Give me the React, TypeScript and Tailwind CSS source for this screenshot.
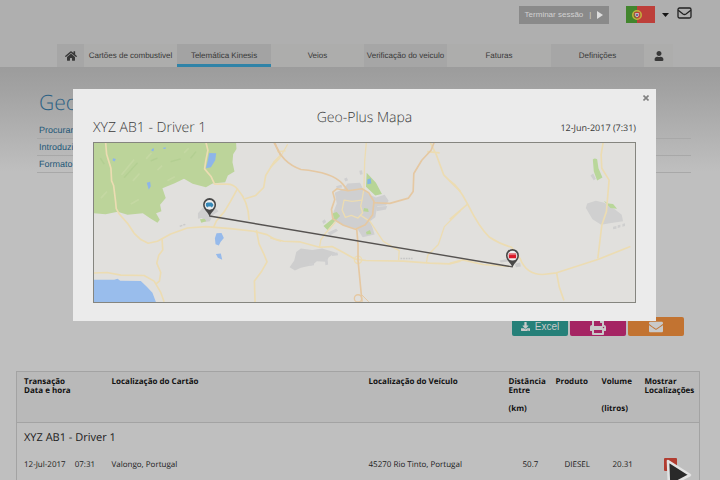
import type { ReactNode } from "react";
import { FaHome, FaUser, FaPrint, FaEnvelope, FaDownload } from "react-icons/fa";

type Tab = { label: ReactNode; name: string; shaded?: boolean; active?: boolean };

const tabs: Tab[] = [
  { name: "Home", label: <FaHome size={12} />, shaded: true },
  { name: "Cartões de combustivel", label: "Cartões de combustivel" },
  { name: "Telemática Kinesis", label: "Telemática Kinesis", active: true },
  { name: "Veios", label: "Veios" },
  { name: "Verificação do veiculo", label: "Verificação do veiculo", shaded: true },
  { name: "Faturas", label: "Faturas" },
  { name: "Definições", label: "Definições", shaded: true },
  { name: "User", label: <FaUser size={10} /> },
];

const links = ["Procurar", "Introduzir", "Formato"];

function Flag() {
  return (
    <svg className="h-[17px] w-[29px]" viewBox="0 0 29 17" role="img" aria-label="Português">
      <rect width="29" height="17" fill="#bd3f3a" />
      <rect width="11" height="17" fill="#42852d" />
      <circle cx="11" cy="9" r="4.2" fill="none" stroke="#c3b13c" strokeWidth="1.6" />
      <path d="M8.800 6.500h4.400v3.500q-2.200 3.500-4.400 0z" fill="#d6cfd0" stroke="#bd403b" strokeWidth="1" />
      <rect x="10.200" y="7.800" width="1.600" height="2.400" fill="#4a5f90" />
    </svg>
  );
}

function Header() {
  return (
    <header className="flex h-[67px] flex-col justify-between bg-[#afafaf]">
      <div className="mr-[28px] flex items-start justify-end pt-[6px]">
        <button className="flex h-[18px] w-[90px] items-center justify-center gap-[6px] bg-[#8a8a8a] text-[8px] text-[#d2d2d2]">
          <span>Terminar sessão</span>
          <span>|</span>
          <svg className="h-[8px] w-[6px]" viewBox="0 0 6 8" aria-hidden="true">
            <path d="M0 0L6 4L0 8Z" fill="#dedede" />
          </svg>
        </button>
        <button className="ml-[17px] flex items-center gap-[7px]" aria-label="Idioma">
          <Flag />
          <svg className="h-[4px] w-[7px]" viewBox="0 0 7 4" aria-hidden="true">
            <path d="M0 0H7L3.500 4Z" fill="#151515" />
          </svg>
        </button>
        <button className="ml-[8px] mt-px" aria-label="Mensagens">
          <svg className="block h-[12px] w-[15px]" viewBox="0 0 15 12" fill="none" stroke="#222" strokeWidth="1.3">
            <rect x="1" y="1" width="13" height="10" rx="1.500" />
            <path d="M1.200 3.200L6 7Q7.500 8 9 7L13.800 3.200" />
          </svg>
        </button>
      </div>
      <nav className="ml-[57px] mr-[47px] grid h-[23px] grid-cols-[27fr_93fr_94fr_93fr_83fr_104fr_93fr_29fr] text-[8px] text-[#383838]">
        {tabs.map((t) => (
          <a
            key={t.name}
            href="#"
            aria-label={t.name}
            className={
              "flex items-center justify-center whitespace-nowrap " +
              (t.active
                ? "border-y-3 border-t-transparent border-b-[#2f83a8] bg-[#a3a3a3] bg-clip-border"
                : t.shaded
                  ? "bg-[#a6a6a6]"
                  : "bg-[#adadac]")
            }
          >
            {t.label}
          </a>
        ))}
      </nav>
    </header>
  );
}

function Pin({ x, y, kind }: { x: number; y: number; kind: "van" | "card" }) {
  return (
    <g transform={`translate(${x} ${y})`}>
      <path d="M0 0C-1-5-6.500-7-6.500-12.500A6.500 6.500 0 0 1 6.500-12.500C6.500-7 1-5 0 0Z" fill="#484848" />
      <circle cy="-12.200" r="4.900" fill="#efefef" />
      {kind === "van" ? (
        <g>
          <path d="M-3.700-10.500V-14H-2.500V-14.600H2L3.700-12.800V-10.500Z" fill="#3789b8" />
          <circle cx="-2" cy="-10.400" r=".7" fill="#3789b8" />
          <circle cx="2" cy="-10.400" r=".7" fill="#3789b8" />
        </g>
      ) : (
        <g>
          <rect x="-3.700" y="-14.500" width="7.400" height="4.800" rx=".5" fill="#d91828" />
          <path d="M-3.700-13.300H3.700" stroke="#efb0b0" strokeWidth=".6" />
        </g>
      )}
    </g>
  );
}

function RouteMap() {
  return (
    <svg
      className="block h-[161px] w-full border border-[#85857f] bg-[#e1e0dd]"
      viewBox="0 0 543 161"
      preserveAspectRatio="xMidYMid slice"
      role="img"
      aria-label="Mapa"
    >
      {/* western area: forest, lakes and coast */}
      <g transform="translate(-3 -4) scale(.33333)" fill="none" strokeLinejoin="round">
        <path
          d="M0 0H436L438 32L428 48L426 72L432 100L412 112L404 132L366 136L346 147L306 137L280 122L252 135L215 150L225 180L208 200L212 220L196 226L207 245L200 254L178 241L156 226L110 230L80 221L44 229L0 225Z"
          fill="#bcd49a"
        />
        <g stroke="#cadba9" strokeWidth="5" opacity=".6">
          <path d="M92 110l38-46M126 128l20-22M166 62l16-18M200 96l14-14M230 128l22-12M280 44l14-14M30 180l18-20M120 198l24-14" />
        </g>
        <g stroke="#aac98a" strokeWidth="4" opacity=".5">
          <path d="M100 118l40-44M180 68l20-8M300 60l16-20M28 60l12 18M240 70l30-8" />
        </g>
        <path d="M356 44L377 45L374 66L361 87L346 90L352 66Z" fill="#8db5ea" />
        <path d="M168 134l10-3 2 13-6 11zM66 60l9 2-4 8-6-3zM183 32l7-2-2 9-6-1zM218 28l8 0-2 4h-6z" fill="#8db5ea" />
        <path d="M378 286L393 285L400 300L390 312L385 323L375 319L373 301ZM376 348L391 347L395 366L382 360Z" fill="#96baeb" />
        <path d="M0 426H70L80 423L88 429L150 430L168 447L185 465L198 500H0Z" fill="#99bdec" />
        <path d="M322 226L336 210L352 206L374 208L384 220L366 232L358 250L342 252L334 240L322 242Z" fill="#cfcfcf" />
        <path d="M328 244L342 242L347 250L332 254Z" fill="#b9d597" />
        <path d="M266 263l8-3 2 4-8 3zM277 259l6-2 2 4-6 2z" fill="#cbcbcb" />
        <g stroke="#ecdcb2" strokeWidth="5">
          <path d="M43 0L47 48L60 90L62 128L68 142L74 190L76 212L85 228L110 256L130 286L150 305L172 316L200 310L240 288L290 270L346 266L420 272L490 280L530 290L552 303L572 310" />
          <path d="M343 0L352 36L346 66L342 92L362 116L372 138L410 138Q430 138 442 154Q474 190 476 246" />
          <path d="M440 154L420 190L402 220L378 248L368 270M464 182L496 172L520 148L526 112L552 70L572 50" />
          <path d="M0 406L48 404L90 412L160 413L190 430L210 464L220 492M214 304L216 336L204 352L198 376L210 404L206 430L194 440" />
          <path d="M498 276L506 318L522 352L530 372L514 400L492 430L494 494" />
        </g>
        <path d="M550 10L572 52" stroke="#e4c096" strokeWidth="5" />
      </g>

      {/* city and ring road */}
      <g transform="translate(177 -4) scale(.33333)" fill="none" strokeLinejoin="round">
        <path
          d="M194 164L222 152L232 136L270 134L280 154L298 170L318 178L344 170L356 188L348 202L322 204L316 238L300 250L308 270L314 290L278 298L262 272L230 266L194 248L190 222L200 196Z"
          fill="#cfcfd0"
        />
        <path d="M78 342L92 332L126 336L156 332L196 344L176 358L168 372L140 370L126 382L92 390L74 398L58 388L72 368Z" fill="#cecece" />
        <path d="M268 98l8-2 2 12-8 2zM222 122l8-4 4 8-8 4zM198 144l16-4 2 8-16 2zM156 250l8-6 4 8-8 6zM172 284l26-12 6 6-24 14zM318 206l34-2-4 10-28 6zM116 378l14-4 2 8-14 2zM164 364l8-2 2 18-8 2zM184 346l18-2 2 8-18 2z" fill="#cfcfd0" />
        <path d="M290 104L318 134L336 168L316 172L288 146ZM160 264L190 240L188 226L200 222L210 234L192 252L172 276ZM282 210L294 212L296 222L280 220ZM288 282L300 276L304 288L290 290Z" fill="#b7d596" />
        <path d="M292 124L302 120L304 136L292 138Z" fill="#83b5e4" />
        <g stroke="#ecdcb2" strokeWidth="4">
          <path d="M290 0L284 70L282 150L276 186M0 88L28 60L52 18M20 40L46 38" />
          <path d="M222 186L246 190L276 186L272 204L278 224L264 240L244 232L226 238L216 216ZM272 232L300 250L320 280L340 310L366 326L388 338L386 368" />
          <path d="M0 300L40 310L90 312L148 328L186 326L220 344L256 364L288 368L400 370L480 376L540 378L572 370" strokeWidth="5" />
          <path d="M148 328L152 306L166 286L196 252M470 374L474 352L506 320L524 266L572 218" />
          <path d="M482 14L500 50L522 110L572 160M472 40L510 44" strokeWidth="5" />
          <circle cx="264" cy="366" r="11" />
        </g>
        <g stroke="#e5c8a2" strokeWidth="5">
          <path d="M10 0Q26 70 92 94Q188 102 218 138L234 158" />
          <path d="M200 152L234 158L276 152L296 164L312 190L308 230L286 260L256 274L220 262L188 242L184 214L194 184L188 162Z" />
          <path d="M312 194L360 196L416 180L430 160L432 106L456 66L484 36L498 0M260 272L264 320L264 368L276 492" />
          <circle cx="264" cy="482" r="11" strokeWidth="4" />
          <path d="M274 470L296 492" strokeWidth="3" />
        </g>
        <path d="M392 362h36" stroke="#c6c6c6" strokeWidth="4" strokeDasharray="5 3" />
      </g>

      {/* eastern roads and town */}
      <g transform="translate(357 -4) scale(.33333)" fill="none" strokeLinejoin="round">
        <path d="M414 196L440 188L466 194L498 214L518 230L522 250L482 256L456 260L430 244L410 210Z" fill="#d0d0d0" />
        <path d="M492 266l10-2v8l-10 2zM506 262l8-2v8l-8 2zM520 258l8-2v8l-8 2zM424 112l8-6 8 16-6 4z" fill="#cfcfcf" />
        <path d="M431 64Q436 58 444 63L448 90L460 118L444 127L434 100ZM464 188L478 196L492 198L504 212L484 210Z" fill="#b9d79a" />
        <path d="M150 368l30-6 4 8-30 4zM196 378l16-4 2 12-14 2z" fill="#cbcbcb" />
        <g stroke="#ecdcb2" strokeWidth="5">
          <path d="M0 128Q26 144 54 198Q90 270 120 298Q150 318 186 328L212 362Q230 410 280 410L322 405L448 364L544 326" />
          <path d="M0 244L54 198M322 405L330 448L344 488M464 0L456 50L458 90L480 126L472 220L458 262L446 362M0 376L40 366L100 380L180 386" />
        </g>
      </g>

      <path d="M116 74L420 125" stroke="#555250" strokeWidth="1.400" />
      <Pin x={116} y={75} kind="van" />
      <Pin x={420} y={126} kind="card" />
    </svg>
  );
}

function MapDialog() {
  return (
    <section
      role="dialog"
      aria-label="Geo-Plus Mapa"
      className="absolute left-[73px] right-[64px] top-[89px] bg-[#ebebeb] px-[20px] pb-[18px] text-[#3a3a3a]"
    >
      <div className="-mr-[15px] flex justify-end pt-[4px]">
        <button aria-label="Fechar" className="flex h-[10px] w-[10px] items-center justify-center">
          <svg className="h-[6px] w-[6px]" viewBox="0 0 6 6" stroke="#808080" strokeWidth="1.600" aria-hidden="true">
            <path d="M.5 .5L5.500 5.500M5.500 .5L.5 5.500" />
          </svg>
        </button>
      </div>
      <div className="grid h-[39px] grid-cols-[1fr_auto_1fr] font-['Open_Sans',sans-serif]">
        <p className="self-end pb-[4px] text-[14px] leading-[20px] font-light">XYZ AB1 - Driver 1</p>
        <h2 className="pt-[5px] text-[14px] leading-[20px] font-light">Geo-Plus Mapa</h2>
        <p className="self-end pb-[4px] text-right text-[9px] leading-[20px]">12-Jun-2017 (7:31)</p>
      </div>
      <RouteMap />
    </section>
  );
}

const th = "pt-[5px] text-left align-top font-bold";
const td = "pt-[6px] align-top";

function Transactions() {
  return (
    <table className="w-full table-fixed border-collapse border border-[#a3a3a3] font-['Open_Sans',sans-serif] text-[8px] leading-[9px] text-[#202020]">
      <colgroup>
        <col className="w-[95px]" />
        <col />
        <col className="w-[140px]" />
        <col className="w-[47px]" />
        <col className="w-[46px]" />
        <col className="w-[43px]" />
        <col className="w-[55px]" />
      </colgroup>
      <thead className="bg-[#b9b9b9] text-[#111]">
        <tr className="h-[51px] border-b border-[#a3a3a3]">
          <th className={th + " pl-[7px]"}>Transação<br />Data e hora</th>
          <th className={th}>Localização do Cartão</th>
          <th className={th}>Localização do Veículo</th>
          <th className={th}>Distância<br />Entre<br /><br />(km)</th>
          <th className={th}>Produto</th>
          <th className={th}>Volume<br /><br /><br />(litros)</th>
          <th className={th}>Mostrar<br />Localizações</th>
        </tr>
      </thead>
      <tbody>
        <tr className="h-[31px]">
          <td colSpan={7} className="pl-[7px] text-[11px] leading-[14px]">XYZ AB1 - Driver 1</td>
        </tr>
        <tr className="h-[48px]">
          <td className={td + " pl-[7px]"}>
            <span className="flex gap-[9px]"><span>12-Jul-2017</span><span>07:31</span></span>
          </td>
          <td className={td}>Valongo, Portugal</td>
          <td className={td}>45270 Rio Tinto, Portugal</td>
          <td className={td + " pl-[14px]"}>50.7</td>
          <td className={td + " pl-[9px]"}>DIESEL</td>
          <td className={td + " pl-[11px]"}>20.31</td>
          <td className="pt-[4px] pl-[19px] align-top">
            <button aria-label="Mostrar localizações" className="block h-[13px] w-[13px] rounded-[1px] bg-[#b13c30]" />
          </td>
        </tr>
      </tbody>
    </table>
  );
}

export default function App() {
  return (
    <div className="relative h-screen overflow-hidden bg-[#bfbfbf] font-['Liberation_Sans',Arial,sans-serif] [text-rendering:geometricPrecision]">
      <Header />
      <main className="bg-[linear-gradient(to_bottom,#9c9c9c_0px,#a3a3a3_25px,#bfbfbf_105px)] pt-[24px]">
        <div className="ml-[37px] mr-[29px]">
          <h1 className="pl-[2px] font-['Open_Sans',sans-serif] text-[21px] leading-[24px] font-light text-[#2d6285]">
            Geo-Plus
          </h1>
          <ul className="pt-[7px] text-[9px] leading-[16px] text-[#1f5878]">
            {links.map((l) => (
              <li key={l} className="border-b border-[#a8a8a8] pl-[2px]">
                <a href="#">{l}</a>
              </li>
            ))}
          </ul>
        </div>
        <div className="mr-[36px] flex justify-end gap-[2px] pt-[144px] text-[#c9c9c9]">
          <button className="flex h-[19px] w-[56px] items-center justify-center gap-[5px] rounded-[2px] bg-[#268079] text-[10px]">
            <FaDownload size={9} /> Excel
          </button>
          <button aria-label="Imprimir" className="flex h-[19px] w-[56px] items-center justify-center rounded-[2px] bg-[#a52463]">
            <FaPrint size={16} />
          </button>
          <button aria-label="Enviar" className="flex h-[19px] w-[56px] items-center justify-center rounded-[2px] bg-[#c27331]">
            <FaEnvelope size={14} />
          </button>
        </div>
        <div className="ml-[16px] mr-[20px] pt-[35px]">
          <Transactions />
        </div>
      </main>
      <MapDialog />
      <svg className="pointer-events-none absolute left-[665px] top-[458px] h-[30px] w-[28px]" viewBox="0 0 28 30" aria-hidden="true">
        <path d="M3 3L4 28L25 17Z" fill="#292929" stroke="#e2e2e2" strokeWidth="2.600" strokeLinejoin="round" />
      </svg>
    </div>
  );
}
